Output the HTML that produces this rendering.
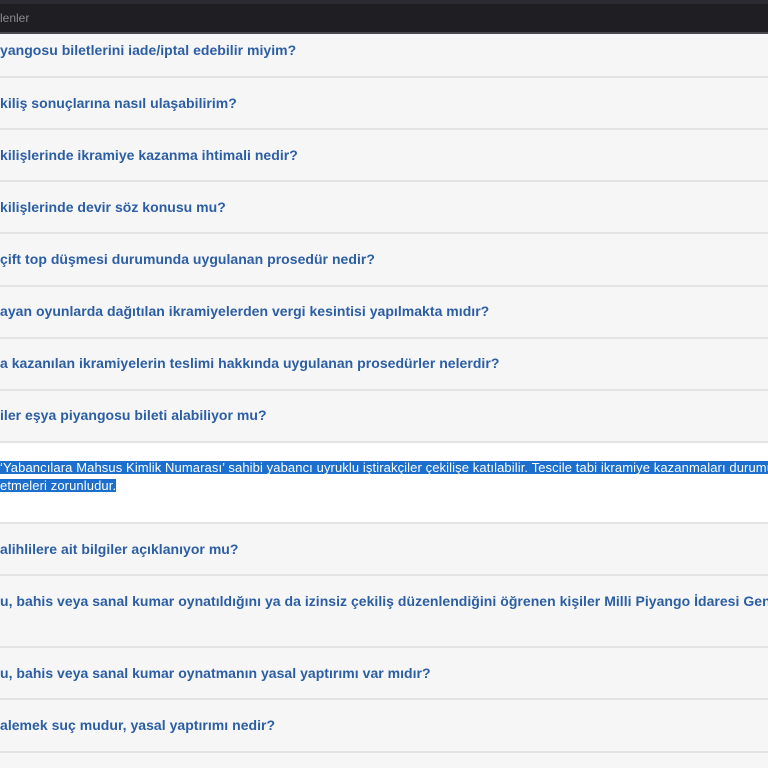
<!DOCTYPE html>
<html><head><meta charset="utf-8"><style>
*{margin:0;padding:0;box-sizing:border-box}
body{width:768px;height:768px;overflow:hidden;background:#f6f6f7;font-family:"Liberation Sans",sans-serif;position:relative}
.top{position:absolute;left:0;top:0;width:768px;height:34px;background:#1f1e23;border-top:4px solid #2b2a30;border-bottom:2px solid #4a4a4e}
.top span{position:absolute;left:0;top:7px;color:#8a8a90;font-size:12px}
.sep{position:absolute;left:0;width:768px;height:2px;background:#e4e4e6}
.q{position:absolute;left:0;white-space:nowrap;color:#2c5ea3;font-weight:bold;font-size:14px;letter-spacing:0.03px;line-height:16px}
.ans{position:absolute;left:0;top:443px;width:768px;height:80px;background:#fff}
.a{position:absolute;left:0;white-space:nowrap;font-size:13px;letter-spacing:0.1px;line-height:13px;color:#fff;background:#1c6fcc}
</style></head><body>
<div class="top"><span>lenler</span></div>
<div class="q" style="top:42px">yangosu biletlerini iade/iptal edebilir miyim?</div>
<div class="sep" style="top:76px"></div>
<div class="q" style="top:95px">kiliş sonuçlarına nasıl ulaşabilirim?</div>
<div class="sep" style="top:128px"></div>
<div class="q" style="top:147px">kilişlerinde ikramiye kazanma ihtimali nedir?</div>
<div class="sep" style="top:180px"></div>
<div class="q" style="top:199px">kilişlerinde devir söz konusu mu?</div>
<div class="sep" style="top:232px"></div>
<div class="q" style="top:251px">çift top düşmesi durumunda uygulanan prosedür nedir?</div>
<div class="sep" style="top:285px"></div>
<div class="q" style="top:303px">ayan oyunlarda dağıtılan ikramiyelerden vergi kesintisi yapılmakta mıdır?</div>
<div class="sep" style="top:337px"></div>
<div class="q" style="top:355px">a kazanılan ikramiyelerin teslimi hakkında uygulanan prosedürler nelerdir?</div>
<div class="sep" style="top:389px"></div>
<div class="q" style="top:407px">iler eşya piyangosu bileti alabiliyor mu?</div>
<div class="sep" style="top:441px"></div>
<div class="ans"></div>
<div class="a" style="top:461px">‘Yabancılara Mahsus Kimlik Numarası’ sahibi yabancı uyruklu iştirakçiler çekilişe katılabilir. Tescile tabi ikramiye kazanmaları durumunda</div>
<div class="a" style="top:479px">etmeleri zorunludur. </div>
<div class="sep" style="top:522px"></div>
<div class="q" style="top:541px">alihlilere ait bilgiler açıklanıyor mu?</div>
<div class="sep" style="top:574px"></div>
<div class="q" style="top:593px">u, bahis veya sanal kumar oynatıldığını ya da izinsiz çekiliş düzenlendiğini öğrenen kişiler Milli Piyango İdaresi Genel</div>
<div class="sep" style="top:646px"></div>
<div class="q" style="top:665px">u, bahis veya sanal kumar oynatmanın yasal yaptırımı var mıdır?</div>
<div class="sep" style="top:698px"></div>
<div class="q" style="top:717px">alemek suç mudur, yasal yaptırımı nedir?</div>
<div class="sep" style="top:751px"></div>
</body></html>
